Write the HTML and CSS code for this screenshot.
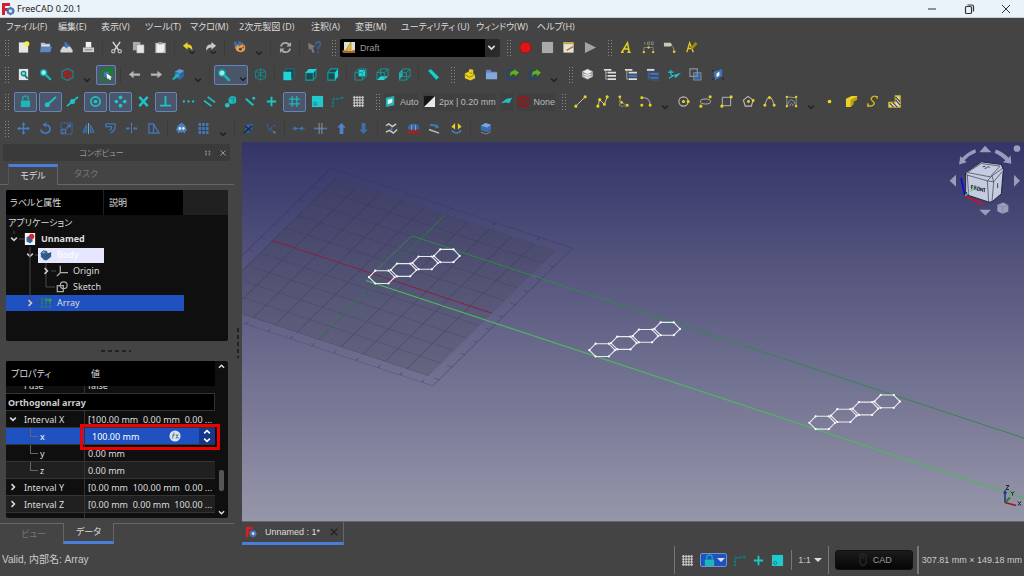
FILE: index.html
```html
<!DOCTYPE html>
<html lang="ja">
<head>
<meta charset="utf-8">
<title>FreeCAD 0.20.1</title>
<link rel="stylesheet" href="styles.css">
</head>
<body>
<svg class="defs" aria-hidden="true">
<defs>
<linearGradient id="sky" x1="0" y1="0" x2="0" y2="1"><stop offset="0" stop-color="#343468"/><stop offset="1" stop-color="#9696aa"/></linearGradient>
<pattern id="fine" width="1" height="1" patternUnits="userSpaceOnUse"><path d="M0 0H1M0 0V1" stroke="#22223c" stroke-opacity=".12" stroke-width=".3"/></pattern>
<pattern id="major" width="10" height="10" patternUnits="userSpaceOnUse"><path d="M0 0H10M0 0V10" stroke="#20203a" stroke-opacity=".36" stroke-width=".6"/></pattern>
<g id="hex"><path d="M0 0L6.3-6.5H19.5L25.7 0L19.5 6.3H6.3Z" fill="none" stroke="#e8e8f0" stroke-width="1.1"/><path d="M0 0h.01M6.3-6.5h.01M19.5-6.5h.01M25.7 0h.01M19.5 6.3h.01M6.3 6.3h.01" stroke="#fff" stroke-width="2.200" stroke-linecap="round"/></g>
<g id="chain"><use href="#hex"/><use href="#hex" x="21.7" y="-7.1"/><use href="#hex" x="43.3" y="-14.2"/><use href="#hex" x="65" y="-21.3"/></g>
</defs>
<symbol id="logo" viewBox="0 0 14 14"><path d="M1 1h8v3H4v2h3v3H4v4H1z" fill="#d3202a"/><circle cx="9.500" cy="9" r="2.800" fill="none" stroke="#4b76b8" stroke-width="2"/><path d="M9.500 4.500v9M5 9h9M6.500 6l6 6M12.500 6l-6 6" stroke="#4b76b8" stroke-width=".8"/><circle cx="9.500" cy="9" r="1.600" fill="#dfe8f4"/></symbol>
<symbol id="new" viewBox="0 0 14 14"><path d="M2 1.500h10v11H2z" fill="#e6e6e2"/><circle cx="10.500" cy="3" r="2.800" fill="#f5ee4a"/></symbol>
<symbol id="open" viewBox="0 0 14 14"><path d="M2 2h4l1 1h5v7H2z" fill="#b9c3cf"/><path d="M2.500 6H14l-2 6H1z" fill="#5b87c5"/><path d="M3 5h8" stroke="#eee"/></symbol>
<symbol id="save" viewBox="0 0 14 14"><path d="M3 6h8l2.500 4v2.500h-13V10z" fill="#d4d6d8"/><path d="M3.500 2Q8 0 8.500 4h2L7 8 3.500 4.500h2Q5.500 3 3.500 2" fill="#4378b8"/></symbol>
<symbol id="print" viewBox="0 0 14 14"><path d="M4 1h6v6H4z" fill="#f1f1f1"/><path d="M1 7h12v5H1z" fill="#cdd0d1"/><path d="M3 9.500h8" stroke="#777"/></symbol>
<symbol id="cut" viewBox="0 0 14 14"><path d="M3 1l6.500 9M11 1L4.500 10" stroke="#dcdcdc" stroke-width="1.500" fill="none"/><g fill="none" stroke="#bbb" stroke-width="1.400"><circle cx="3.500" cy="11" r="1.700"/><circle cx="10.500" cy="11" r="1.700"/></g></symbol>
<symbol id="copy" viewBox="0 0 14 14"><path d="M1 1h8v9H1z" fill="#aaa"/><path d="M5 4h8v9H5z" fill="#e5e5e5" stroke="#888" stroke-width=".5"/></symbol>
<symbol id="paste" viewBox="0 0 14 14"><path d="M1.500 2h11v11h-11z" fill="#c4c4c4"/><path d="M3 3.500h8V10l-2 2H3z" fill="#f0f0f0"/><path d="M5 1h4v2.500H5z" fill="#999"/></symbol>
<symbol id="undo" viewBox="0 0 14 14"><path d="M1 5l5-4v2.500q6 0 5 7.500Q10 7 6 7v2.500z" fill="#e8d028"/><path d="M8 11l3 2.500 3-2.500" stroke="#222" stroke-width="1.500" fill="none"/></symbol>
<symbol id="redo" viewBox="0 0 14 14"><path d="M13 5L8 1v2.500Q1 4 2.500 11 4 7 8 7v2.500z" fill="#c8c8c8"/><path d="M7 11l3 2.500 3-2.500" stroke="#222" stroke-width="1.500" fill="none"/></symbol>
<symbol id="macro" viewBox="0 0 14 14"><path d="M2 5q6-3 11 1 1 6-5 6Q2 11 2 5z" fill="#e8a04a"/><path d="M1 1l3-.5V6L2 7zM5 1l3-1 1 4-3 2z" fill="#3f6fae"/><circle cx="8" cy="9" r="1.600" fill="#444"/><circle cx="11" cy="7" r="1" fill="#c23"/><path d="M9 2l4 4" stroke="#d9c08a"/></symbol>
<symbol id="refresh" viewBox="0 0 14 14"><path d="M2 6q1-4 5-4 3 0 4 2.500M12 8q-1 4-5 4-3 0-4-2.500" fill="none" stroke="#aaa" stroke-width="1.800"/><path d="M13 1v5H8zM1 13V8h5z" fill="#aaa"/></symbol>
<symbol id="whats" viewBox="0 0 14 14"><path d="M0 2l8 4-3 1 2 5-2 1-2-5-2 2z" fill="#7b7b7b"/><path d="M8.500 4q0-3 2.500-3t2.500 2.500q0 2-2.500 3V9M11 11v1.800" fill="none" stroke="#38669b" stroke-width="1.800"/></symbol>
<symbol id="draft" viewBox="0 0 14 14"><path d="M2 1h11v11H2z" fill="#ddd"/><path d="M4 9l5-8v8z" fill="#e4c31e" stroke="#8f7000" stroke-width=".5"/><path d="M0 9l8 1 5-1v3H1z" fill="#a8671c"/></symbol>
<symbol id="record" viewBox="0 0 14 14"><circle cx="7" cy="7" r="6" fill="#e01616" stroke="#8d0d0d" stroke-width=".6"/></symbol>
<symbol id="stop" viewBox="0 0 14 14"><path d="M1 1h12v12H1z" fill="#aaa"/></symbol>
<symbol id="edit" viewBox="0 0 14 14"><path d="M1.500 1.500h11v11h-11z" fill="#e4e4df"/><path d="M1.500 1.500h11v2h-11z" fill="#c7aa38"/><path d="M5 10l7-4" stroke="#b7751e" stroke-width="1.600"/></symbol>
<symbol id="play" viewBox="0 0 14 14"><path d="M1 1l12 6-12 6z" fill="#a4a4a4"/></symbol>
<symbol id="texta" viewBox="0 0 14 14"><path d="M2 12l6-10 2 10M4.500 8.500h5M1 12h3M8 12h3.500" fill="none" stroke="#e6cf25" stroke-width="1.600"/></symbol>
<symbol id="dim" viewBox="0 0 14 14"><path d="M3 1v3M6 1h2v3H6zM10 1h2v3h-2zM2 7v5M12 7v5M2 7h10" fill="none" stroke="#8c8c8c" stroke-width=".9"/><path d="M2 12h.01M12 12h.01M7 7h.01" stroke="#e7cf20" stroke-width="2.500" stroke-linecap="round"/></symbol>
<symbol id="label" viewBox="0 0 14 14"><path d="M1 2h7l2 2-2 2H1z" fill="#ccc9b8"/><path d="M9 5q3 2 3 6" stroke="#999" fill="none"/><circle cx="12" cy="11.500" r="1.400" fill="#e7cf20"/></symbol>
<symbol id="astyle" viewBox="0 0 14 14"><path d="M2 12L5 2l4 10M3 8h5" fill="none" stroke="#e0c723" stroke-width="1.500"/><path d="M6 9l1-3 4-5 2.500 2L9 8z" fill="#a18a08"/></symbol>
<symbol id="fit" viewBox="0 0 14 14"><path d="M2 1h10v12H2z" fill="#e3e6e4"/><circle cx="7" cy="6" r="2.500" fill="#67d6d5" stroke="#087c80" stroke-width="1.200"/><path d="M8.500 8l3 3.500" stroke="#087c80" stroke-width="2"/></symbol>
<symbol id="zoomi" viewBox="0 0 14 14"><circle cx="5" cy="5" r="3.300" fill="#9beceb" stroke="#0b989c" stroke-width="1.500"/><path d="M7.500 7.500l4.500 4.500" stroke="#16b7ba" stroke-width="2.500" stroke-linecap="round"/></symbol>
<symbol id="nodraw" viewBox="0 0 14 14"><path d="M7 .5l6 3.200v6.600l-6 3.200-6-3.200V3.700z" fill="none" stroke="#1a8a8f" stroke-width="1.200"/><circle cx="7" cy="7" r="3.600" fill="#3a4a4a" stroke="#c51414" stroke-width="1.500"/><path d="M4.500 4.500l5 5" stroke="#c51414" stroke-width="1.500"/></symbol>
<symbol id="boxsel" viewBox="0 0 14 14"><path d="M1 4l4-3h8v8l-3 4H1zM1 4h9v9M10 4l3-3" fill="none" stroke="#07910e" stroke-width="1.500"/><circle cx="7" cy="7" r="3.200" fill="#4676be"/><path d="M7 6l6 4-2 .5 1 2-1.500.5-1-2L8 12z" fill="#fff"/></symbol>
<symbol id="left" viewBox="0 0 14 14"><path d="M1 7l5-4v2.800h7v2.500H6V11z" fill="#b5b5b5"/></symbol>
<symbol id="right" viewBox="0 0 14 14"><path d="M13 7L8 3v2.800H1v2.500h7V11z" fill="#b5b5b5"/></symbol>
<symbol id="bluebox" viewBox="0 0 14 14"><path d="M3 4l5-3 5 2v6l-4 4-6-3z" fill="#32639e"/><path d="M3 4l5-3 5 2-4 3z" fill="#6594d0"/><path d="M0 12l4-5-1-1h5v5l-1.500-1.500L2 13z" fill="#1fb0b5"/></symbol>
<symbol id="wire" viewBox="0 0 14 14"><path d="M7 1l5.500 2.500v7L7 13l-5.500-2.500v-7zM1.500 3.500L7 6l5.500-2.500M7 6v7M7 1v6M1.500 10.500L7 7l5.500 3.500" fill="none" stroke="#138b8e" stroke-width="1"/></symbol>
<symbol id="front" viewBox="0 0 14 14"><path d="M2 4l3-3h8v8l-3 4H2z" fill="#14474a" stroke="#12898c" stroke-width=".8"/><path d="M1.500 4H10v9H1.500z" fill="#20d5d8"/></symbol>
<symbol id="top" viewBox="0 0 14 14"><path d="M2 5h8v8H2zM10 5l3-4v8l-3 4" fill="#1f4a4c" stroke="#15989c" stroke-width="1.200"/><path d="M1.500 5l3.500-4h8.500L10 5z" fill="#20d5d8"/></symbol>
<symbol id="side" viewBox="0 0 14 14"><path d="M2 5h8v8H2zL5 1h8" fill="#1f4a4c" stroke="#15989c" stroke-width="1.200"/><path d="M2 5l3-4h8l-3 4z" fill="#1f4a4c" stroke="#15989c"/><path d="M9.500 5L13 1v8.500L9.500 13z" fill="#20d5d8"/></symbol>
<symbol id="rear" viewBox="0 0 14 14"><path d="M5 2h7v7H5z" fill="#20d5d8"/><path d="M1 5l4-4h8v8l-4 4H1zV5h8v8M9 5l4-4" fill="none" stroke="#15989c"/></symbol>
<symbol id="bottom" viewBox="0 0 14 14"><path d="M1 13l4-4h8l-4 4z" fill="#20d5d8"/><path d="M1 5l4-4h8v8M1 5h8v8M1 5v8M9 5l4-4M5 1v7" fill="none" stroke="#15989c"/></symbol>
<symbol id="lside" viewBox="0 0 14 14"><path d="M1 5l4-4v8l-4 4z" fill="#20aeb1"/><path d="M5 1h8v8l-4 4H1M1 5h8v8M9 5l4-4M5 9h8" fill="none" stroke="#15989c"/></symbol>
<symbol id="measure" viewBox="0 0 14 14"><path d="M1 3l3-2 9 9-3 3z" fill="#20cdd1" stroke="#0b7478" stroke-width=".6"/></symbol>
<symbol id="part" viewBox="0 0 14 14"><path d="M2 6l4-2 1-3 4 1v4l2 2v3l-5 2.500L2 11z" fill="#e9cf22"/><path d="M2 7l5 3 5-2.500M7 5l3 1" fill="none" stroke="#8d7a05" stroke-width=".9"/></symbol>
<symbol id="folder" viewBox="0 0 14 14"><path d="M1 2h5l1 2h6v8H1z" fill="#5e87bd"/><path d="M1 5h12v7H1z" fill="#82a8dc"/></symbol>
<symbol id="link" viewBox="0 0 14 14"><path d="M6 2H3Q1.500 2 1.500 3.500v7q0 1.500 1.500 1.500h6q1.500 0 1.500-1.500V9.500" fill="none" stroke="#25466e" stroke-width="1.800"/><path d="M4.500 9q-1-6 4.500-6V1l5 4-4.500 4V6.500Q6 6 4.500 9" fill="#57b81c"/></symbol>
<symbol id="layers" viewBox="0 0 14 14"><path d="M1 9.500L7 12.500l6-3V4L7 1 1 4z" fill="#aaa"/><path d="M1 4l6-3 6 3-6 3zM1 6.500l6 3 6-3M1 9l6 3 6-3" fill="#eee" stroke="#777" stroke-width=".6"/></symbol>
<symbol id="treew" viewBox="0 0 14 14"><path d="M1 2h8M5 5h9M5 8.500h9M5 12h9" stroke="#ddd" stroke-width="2"/><path d="M3 3v9h2M3 5h2M3 8.500h2" fill="none" stroke="#aaa"/></symbol>
<symbol id="treeb" viewBox="0 0 14 14"><path d="M1 2h8M5 5h9M5 12h9" stroke="#ddd" stroke-width="2"/><path d="M5 8.500h9" stroke="#3c75c8" stroke-width="2.500"/><path d="M3 3v9h2" fill="none" stroke="#aaa"/></symbol>
<symbol id="treeall" viewBox="0 0 14 14"><path d="M1 2h8" stroke="#ddd" stroke-width="2"/><path d="M4 4.500h9.500v8.500H4z" fill="none" stroke="#3569ae" stroke-dasharray="2 1"/><path d="M5 6.500h8M5 10.500h8" stroke="#3c75c8" stroke-width="2"/><path d="M2.500 3v9" stroke="#3569ae"/></symbol>
<symbol id="wp" viewBox="0 0 14 14"><path d="M4 8l10-3-6 6-1-3z" fill="#1fc8cb"/><path d="M0 4.500h6M3 2v5l3 2M1 11l5-3" fill="none" stroke="#1fc8cb" stroke-width="1.200"/></symbol>
<symbol id="overlap" viewBox="0 0 14 14"><path d="M5 5h8v8H5z" fill="#3467a7" stroke="#888"/><path d="M1 1h8v8H1z" fill="none" stroke="#8b9298" stroke-width="1.300"/></symbol>
<symbol id="plane" viewBox="0 0 14 14"><path d="M3 4l9-3v8l-8 4z" fill="#4076b8"/><path d="M6 6l3-2v4l-3 2z" fill="#fff"/><path d="M1 2l2 2M1 13l3-2M12 10l2 3" stroke="#222"/></symbol>
<symbol id="lock" viewBox="0 0 14 14"><path d="M4 6V4q0-3 3-3t3 3v2" fill="none" stroke="#1ba5a8" stroke-width="1.500"/><path d="M2 6h10v7H2z" fill="#1cb7ba"/></symbol>
<symbol id="send" viewBox="0 0 14 14"><path d="M3.500 10.500L13 2" stroke="#1cc5c8" stroke-width="2"/><circle cx="3.500" cy="10.500" r="2.700" fill="#1cc5c8"/></symbol>
<symbol id="smid" viewBox="0 0 14 14"><path d="M1 12L13 2" stroke="#1cc5c8" stroke-width="1.800"/><circle cx="7" cy="7" r="2.700" fill="#1cc5c8"/></symbol>
<symbol id="scen" viewBox="0 0 14 14"><circle cx="7" cy="7" r="5" fill="none" stroke="#1cc5c8" stroke-width="1.800"/><circle cx="7" cy="7" r="2" fill="#1cc5c8"/></symbol>
<symbol id="sang" viewBox="0 0 14 14"><g fill="#1cc5c8"><circle cx="7" cy="2.500" r="2"/><circle cx="7" cy="11.500" r="2"/><circle cx="2.500" cy="7" r="2"/><circle cx="11.500" cy="7" r="2"/></g></symbol>
<symbol id="sint" viewBox="0 0 14 14"><path d="M2.500 2l9 10M11.500 2l-9 10" stroke="#1cc5c8" stroke-width="2.600"/></symbol>
<symbol id="sperp" viewBox="0 0 14 14"><path d="M7 1v10M1 11.500h12" stroke="#1cc5c8" stroke-width="2"/></symbol>
<symbol id="sext" viewBox="0 0 14 14"><path d="M2 7h.01M7 7h.01M12 7h.01" stroke="#1cc5c8" stroke-width="2.500" stroke-linecap="round"/></symbol>
<symbol id="spar" viewBox="0 0 14 14"><path d="M1 6l8 6M5 2l8 6" stroke="#1cc5c8" stroke-width="1.800"/></symbol>
<symbol id="sspec" viewBox="0 0 14 14"><path d="M5 3l3-2 5 1v6l-3 2-5-1z" fill="#20b9bb"/><path d="M5 3l5 1 3-2M10 4v6" fill="none" stroke="#0d7376" stroke-width=".7"/><circle cx="3.500" cy="11" r="2.500" fill="#1cc5c8"/></symbol>
<symbol id="snear" viewBox="0 0 14 14"><path d="M2 4l8 7" stroke="#1cc5c8" stroke-width="2"/><circle cx="10.500" cy="3.500" r="1.500" fill="#1cc5c8"/></symbol>
<symbol id="splus" viewBox="0 0 14 14"><path d="M7 2v10M2 7h10" stroke="#1cc5c8" stroke-width="2"/></symbol>
<symbol id="sgrid" viewBox="0 0 14 14"><path d="M4.500 1v12M9.500 1v12M1 4.500h12M1 9.500h12" stroke="#1cb8bb" stroke-width="1.300"/></symbol>
<symbol id="swp" viewBox="0 0 14 14"><path d="M1 1h12v12H1z" fill="#20c9cc"/><circle cx="4.500" cy="9.500" r="1.700" fill="none" stroke="#138286"/></symbol>
<symbol id="sdim" viewBox="0 0 14 14"><path d="M2 13V5M2 4h8M11 4l3-2" fill="none" stroke="#157a7e" stroke-width="2.200" stroke-dasharray="2.500 1"/><path d="M10 5v6" stroke="#105558" stroke-width="1.500" stroke-dasharray="2 1"/></symbol>
<symbol id="grid" viewBox="0 0 14 14"><path d="M2.500 1v12M5.500 1v12M8.500 1v12M11.500 1v12M1 2.500h12M1 5.500h12M1 8.500h12M1 11.500h12" stroke="#d8d8d8"/></symbol>
<symbol id="auto" viewBox="0 0 14 14"><path d="M2 3l9-2v10l-9 2z" fill="#1fb5b8"/><path d="M4 5l5-1v4l-5 2z" fill="#eee"/></symbol>
<symbol id="bw" viewBox="0 0 14 14"><path d="M1 1h12v12H1z" fill="#161616"/><path d="M13 1v12H1z" fill="#e8e8e8"/></symbol>
<symbol id="apply" viewBox="0 0 14 14"><path d="M1 9l6-5 6-1-3 6-3-1z" fill="#20bfc2"/></symbol>
<symbol id="none" viewBox="0 0 14 14"><circle cx="7" cy="7" r="5.500" fill="none" stroke="#a01218" stroke-width="1.800"/><path d="M3 3l8 8" stroke="#a01218" stroke-width="1.800"/></symbol>
<symbol id="line" viewBox="0 0 14 14"><path d="M2 12L12 2" stroke="#ccc"/><path d="M2 12h.01M12 2h.01" stroke="#ecd318" stroke-width="3.400" stroke-linecap="round"/></symbol>
<symbol id="poly" viewBox="0 0 14 14"><path d="M2 12l2-7 5 5 3-8" stroke="#ccc" fill="none"/><path d="M2 12h.01M4 5h.01M9 10h.01M12 2h.01" stroke="#ecd318" stroke-width="3.400" stroke-linecap="round"/></symbol>
<symbol id="fillet" viewBox="0 0 14 14"><path d="M3 1v11h10M3 2q1 8 9 9" stroke="#999" fill="none" stroke-dasharray="3 1"/><path d="M3 2h.01M5 8h.01M11 11h.01" stroke="#ecd318" stroke-width="3" stroke-linecap="round"/></symbol>
<symbol id="arc" viewBox="0 0 14 14"><path d="M3 3q9-1 9 8" stroke="#bbb" fill="none"/><path d="M3 3h.01M3 11h.01M12 11h.01" stroke="#ecd318" stroke-width="3.200" stroke-linecap="round"/></symbol>
<symbol id="circle" viewBox="0 0 14 14"><circle cx="7" cy="7" r="5" fill="none" stroke="#bbb" stroke-width="1.200"/><path d="M7 7h.01M12 7h.01" stroke="#ecd318" stroke-width="3.400" stroke-linecap="round"/></symbol>
<symbol id="ellipse" viewBox="0 0 14 14"><ellipse cx="7" cy="7" rx="5.500" ry="2.700" fill="none" stroke="#bbb"/><path d="M2 12h.01M12 2h.01" stroke="#ecd318" stroke-width="3.400" stroke-linecap="round"/></symbol>
<symbol id="rect" viewBox="0 0 14 14"><path d="M2.500 2.500h9v9h-9z" fill="none" stroke="#bbb"/><path d="M2 12h.01M12 2h.01" stroke="#ecd318" stroke-width="3.400" stroke-linecap="round"/></symbol>
<symbol id="penta" viewBox="0 0 14 14"><path d="M6.500 1.500L12 5.500 10 12H3.500L1.500 5.500z" fill="none" stroke="#bbb" stroke-width="1.200"/><path d="M7 7h.01M12 6h.01" stroke="#ecd318" stroke-width="3.200" stroke-linecap="round"/></symbol>
<symbol id="spline" viewBox="0 0 14 14"><path d="M2 11Q7-7 12 11" fill="none" stroke="#bbb"/><path d="M2 11h.01M7 3h.01M12 11h.01" stroke="#ecd318" stroke-width="3.200" stroke-linecap="round"/></symbol>
<symbol id="bezier" viewBox="0 0 14 14"><path d="M2 2v10M12 2v10M2 2l10 1M2 12q5-14 10 0M5 12q2-6 4 0" fill="none" stroke="#999"/><path d="M2 12h.01M12 12h.01M2 2h.01M12 2h.01" stroke="#ecd318" stroke-width="2.600" stroke-linecap="round"/></symbol>
<symbol id="point" viewBox="0 0 14 14"><circle cx="7" cy="7" r="2" fill="#ecd318"/></symbol>
<symbol id="facebinder" viewBox="0 0 14 14"><path d="M1 4l6-3h6v4l-4 2v3l-3 3H1z" fill="#ead12a"/><path d="M6 5l7-3v3L9 7v3l-3 3z" fill="#b89f10"/></symbol>
<symbol id="shape" viewBox="0 0 14 14"><path d="M12 3Q10 0 7 2 4 4 7 6.500 11 9 7 11.500 3 13 2 10M12 1v3M2 9v4" fill="none" stroke="#cdb51f" stroke-width="1.500"/></symbol>
<symbol id="hatch" viewBox="0 0 14 14"><path d="M8 1h5v12H1V8h7z" fill="#ddd" stroke="#d8bc24" stroke-width="1.500"/><path d="M2 9l4 4M5 8l5 5M8 5l5 6M8 2l5 5" stroke="#444" stroke-width="1.300"/></symbol>
<symbol id="move" viewBox="0 0 14 14"><path d="M7 1v12M1 7h12" stroke="#467fc5" stroke-width="1.500"/><path d="M7 0l2 3H5zM7 14l2-3H5zM0 7l3-2v4zM14 7l-3-2v4z" fill="#467fc5"/></symbol>
<symbol id="rotate" viewBox="0 0 14 14"><path d="M8 3q4 1 4 5-1 4-5 4-4 0-5-4" fill="none" stroke="#4277b8" stroke-width="1.900"/><path d="M8 0v6L3.500 3z" fill="#4277b8"/></symbol>
<symbol id="scale" viewBox="0 0 14 14"><path d="M1 1h12v12H1z" fill="none" stroke="#4277b8" stroke-dasharray="2 1"/><path d="M2 8h4v4H2zM7 7l4-4M8 3h3v3" fill="none" stroke="#4277b8" stroke-width="1.300"/></symbol>
<symbol id="mirror" viewBox="0 0 14 14"><path d="M5 3v8H1zM9 3v8h4z" fill="#315d96" stroke="#4277b8"/><path d="M7 1v12" stroke="#8aa" /></symbol>
<symbol id="offset" viewBox="0 0 14 14"><path d="M2 2h10q1 7-5 10M2 2v3h6q1 2-2 4" fill="none" stroke="#4277b8" stroke-width="1.400"/></symbol>
<symbol id="trim" viewBox="0 0 14 14"><path d="M7 1v12" stroke="#628bb8" stroke-dasharray="3 1"/><path d="M1 7h4M9 7h4" stroke="#4277b8" stroke-width="2"/></symbol>
<symbol id="stretch" viewBox="0 0 14 14"><path d="M2 2h5v10H2zM7 2l6 10H7" fill="none" stroke="#4277b8" stroke-width="1.400"/></symbol>
<symbol id="clone" viewBox="0 0 14 14"><path d="M3 4q4-6 8 0l2 5-2 1v2H9.500v-1h-5v1H3v-2L1 9z" fill="#4d7fbd"/><circle cx="5.200" cy="7" r="1.500" fill="#d7e3f2"/><circle cx="9" cy="7" r="1.500" fill="#d7e3f2"/></symbol>
<symbol id="array" viewBox="0 0 14 14"><path d="M3 1v12M7 1v12M11 1v12" stroke="#4277b8" stroke-width="2.800" stroke-dasharray="3.300 1"/></symbol>
<symbol id="edita" viewBox="0 0 14 14"><path d="M4 3l8-1-2 9-7 1z" fill="#31619d"/><path d="M2 12l9-8M3 4l7 6" stroke="#172944" stroke-width="1.500"/></symbol>
<symbol id="subel" viewBox="0 0 14 14"><path d="M3 2l2 5 7 5M12 3L5 9" fill="none" stroke="#355f91" stroke-width="1.500" stroke-dasharray="3 1"/><circle cx="11" cy="11" r="1.300" fill="#777"/></symbol>
<symbol id="join" viewBox="0 0 14 14"><path d="M0 7h14" stroke="#355f95" stroke-width="1.500"/><path d="M2.500 4.500L6 7 2.500 9.500zM11.500 4.500L8 7l3.500 2.500z" fill="#4277b8"/></symbol>
<symbol id="split" viewBox="0 0 14 14"><path d="M0 7h14" stroke="#4277b8" stroke-width="1.800"/><path d="M5.500 1v12M8.500 1v12" stroke="#999"/></symbol>
<symbol id="up" viewBox="0 0 14 14"><path d="M7 1l4.500 5H9v7H5V6H2.500z" fill="#5083ca"/></symbol>
<symbol id="down" viewBox="0 0 14 14"><path d="M7 13l4.500-5H9V1H5v7H2.500z" fill="#3f6eae"/></symbol>
<symbol id="wtob" viewBox="0 0 14 14"><path d="M1 4l3-2 4 3 4-3M1 11l4-2 4 3 4-4" fill="none" stroke="#ccc" stroke-width="1.500"/><path d="M7 6v3" stroke="#4277b8" stroke-width="2"/></symbol>
<symbol id="heal" viewBox="0 0 14 14"><path d="M1 6q0-4 6-4t6 4v2H1z" fill="#3768a6"/><path d="M2 8q-1 4 2.500 3.500T7 9q-1 3 2.500 3T12 8" fill="none" stroke="#bd171e" stroke-width="1.800"/><path d="M5 3v6M9 3v6" stroke="#85a6d2"/></symbol>
<symbol id="slope" viewBox="0 0 14 14"><path d="M1 8l11 4" stroke="#bbb" stroke-width="1.600"/><path d="M2 3q5 0 8 2" stroke="#4277b8" stroke-width="2" fill="none"/><path d="M9 2l3 4-4 1z" fill="#4277b8"/></symbol>
<symbol id="flip" viewBox="0 0 14 14"><path d="M5.500 1v7L1.500 5zM8.500 1v7l4-3z" fill="#eace20"/><path d="M2 9q5 6 10 0" fill="none" stroke="#4277b8" stroke-width="2"/></symbol>
<symbol id="view2d" viewBox="0 0 14 14"><path d="M2 4l5-3 6 2v5l-4 3-7-2z" fill="#386eaf"/><path d="M2 4l5-3 6 2-4 3z" fill="#79a6dd"/><path d="M2 11l6 2 5-3" fill="none" stroke="#888"/></symbol>
<symbol id="doc" viewBox="0 0 14 14"><path d="M1 0h12v14H1z" fill="#f3f3f4"/><path d="M3 5l4-2 3 2v5l-3 2-4-2z" fill="#32669d"/><circle cx="9" cy="4" r="3" fill="#dc222a"/></symbol>
<symbol id="body" viewBox="0 0 14 14"><path d="M1 5l3-3 4 1 1 2 4-1v5l-5 4-3 0-4-4z" fill="#315f8d"/><path d="M1 5l3-3 4 1-3 3zM6 9l7-5" fill="#6ba0cf" stroke="#1d416b" stroke-width=".8"/></symbol>
<symbol id="origin" viewBox="0 0 14 14"><path d="M5 1v8h9M5 9l-4 4" fill="none" stroke="#aaa" stroke-width="1.500"/></symbol>
<symbol id="sketch" viewBox="0 0 14 14"><path d="M1.500 5.500h7v7h-7z" fill="none" stroke="#aaa" stroke-width="1.500"/><circle cx="9" cy="5" r="4" fill="none" stroke="#aaa" stroke-width="1.400"/></symbol>
<symbol id="tarray" viewBox="0 0 14 14"><path d="M2.500 1v12M7 1v12M11.500 5v8" stroke="#2d7184" stroke-width="2.800" stroke-dasharray="3.300 1"/><path d="M6 3h5V1l3 2.500-3 2.500V4.500H6z" fill="#42a828"/></symbol>
<symbol id="chev" viewBox="0 0 14 14"><path d="M3 5l4 4 4-4" fill="none" stroke="currentColor" stroke-width="2.200"/></symbol>
<symbol id="x" viewBox="0 0 14 14"><path d="M2.500 2.500l9 9M11.500 2.500l-9 9" fill="none" stroke="currentColor" stroke-width="1.700"/></symbol>
</svg>

<header class="titlebar">
<svg class="ico"><use href="#logo"/></svg><h1>FreeCAD 0.20.1</h1>
<div class="winctl">
<button aria-label="最小化"><svg viewBox="0 0 14 14"><path d="M3 7h8" stroke="#333"/></svg></button>
<button aria-label="元に戻す"><svg viewBox="0 0 14 14"><path d="M3.500 5.500q0-1 1-1h4q1 0 1 1v5q0 1-1 1h-4q-1 0-1-1zM5.500 3h4.500q1.500 0 1.500 1.500v5" fill="none" stroke="#333" stroke-width="1.200"/></svg></button>
<button aria-label="閉じる"><svg viewBox="0 0 14 14"><path d="M3 3l8 8M11 3l-8 8" stroke="#333"/></svg></button>
</div>
</header>

<nav class="menubar" aria-label="メニュー">
<button>ファイル(F)</button><button>編集(E)</button><button>表示(V)</button><button>ツール(T)</button><button>マクロ(M)</button><button>2次元製図 (D)</button><button>注釈(A)</button><button>変更(M)</button><button>ユーティリティ (U)</button><button>ウィンドウ(W)</button><button>ヘルプ(H)</button>
</nav>

<div class="toolbars">
<div class="bar">
<i class="grip"></i>
<div class="seg s4"><button aria-label="新規"><svg><use href="#new"/></svg></button><button aria-label="開く"><svg><use href="#open"/></svg></button><button aria-label="保存"><svg><use href="#save"/></svg></button><button aria-label="印刷"><svg><use href="#print"/></svg></button></div>
<i class="sep"></i>
<div class="seg s3"><button aria-label="切り取り"><svg><use href="#cut"/></svg></button><button aria-label="コピー"><svg><use href="#copy"/></svg></button><button aria-label="貼り付け"><svg><use href="#paste"/></svg></button></div>
<i class="sep"></i>
<div class="seg s2"><button aria-label="元に戻す"><svg><use href="#undo"/></svg></button><button aria-label="やり直し"><svg><use href="#redo"/></svg></button></div>
<i class="sep"></i>
<div class="seg s1"><button aria-label="マクロ"><svg><use href="#macro"/></svg></button></div><button class="more" aria-label="マクロ一覧"><svg><use href="#chev"/></svg></button>
<i class="sep"></i>
<div class="seg s1"><button aria-label="更新"><svg><use href="#refresh"/></svg></button></div>
<i class="sep"></i>
<div class="seg s1"><button aria-label="これは何"><svg><use href="#whats"/></svg></button></div>
<i class="grip"></i>
<div class="workbench"><svg><use href="#draft"/></svg><select aria-label="ワークベンチ"><option>Draft</option></select><svg class="arrow"><use href="#chev"/></svg></div>
<i class="grip"></i>
<div class="seg s4"><button aria-label="記録"><svg><use href="#record"/></svg></button><button aria-label="停止"><svg><use href="#stop"/></svg></button><button aria-label="マクロ編集"><svg><use href="#edit"/></svg></button><button aria-label="実行"><svg><use href="#play"/></svg></button></div>
<i class="grip"></i>
<div class="seg s4"><button aria-label="テキスト"><svg><use href="#texta"/></svg></button><button aria-label="寸法"><svg><use href="#dim"/></svg></button><button aria-label="ラベル"><svg><use href="#label"/></svg></button><button aria-label="注釈スタイル"><svg><use href="#astyle"/></svg></button></div>
</div>

<div class="bar">
<i class="grip"></i>
<div class="seg s3"><button aria-label="全体表示"><svg><use href="#fit"/></svg></button><button aria-label="選択を表示"><svg><use href="#zoomi"/></svg></button><button aria-label="描画スタイル"><svg><use href="#nodraw"/></svg></button></div><button class="more" aria-label="描画スタイル一覧"><svg><use href="#chev"/></svg></button>
<div class="seg s1"><button class="on" aria-label="ボックス選択"><svg><use href="#boxsel"/></svg></button></div>
<i class="sep"></i>
<div class="seg s3"><button aria-label="戻る"><svg><use href="#left"/></svg></button><button aria-label="進む"><svg><use href="#right"/></svg></button><button aria-label="リンク先"><svg><use href="#bluebox"/></svg></button></div><button class="more" aria-label="リンク一覧"><svg><use href="#chev"/></svg></button>
<i class="sep"></i>
<button class="on zoomdrop" aria-label="ズーム"><svg><use href="#zoomi"/></svg><svg class="low"><use href="#chev"/></svg></button>
<div class="seg s1"><button aria-label="等角投影"><svg><use href="#wire"/></svg></button></div>
<i class="sep"></i>
<div class="seg s3"><button aria-label="前面"><svg><use href="#front"/></svg></button><button aria-label="上面"><svg><use href="#top"/></svg></button><button aria-label="右面"><svg><use href="#side"/></svg></button></div>
<i class="sep"></i>
<div class="seg s3"><button aria-label="背面"><svg><use href="#rear"/></svg></button><button aria-label="底面"><svg><use href="#bottom"/></svg></button><button aria-label="左面"><svg><use href="#lside"/></svg></button></div>
<i class="sep"></i>
<div class="seg s1"><button aria-label="距離計測"><svg><use href="#measure"/></svg></button></div>
<i class="grip"></i>
<div class="seg s4"><button aria-label="パート"><svg><use href="#part"/></svg></button><button aria-label="グループ"><svg><use href="#folder"/></svg></button><button aria-label="リンク作成"><svg><use href="#link"/></svg></button><button aria-label="サブリンク"><svg><use href="#link"/></svg></button></div><button class="more" aria-label="リンク操作"><svg><use href="#chev"/></svg></button>
<i class="grip"></i>
<div class="seg s7"><button aria-label="レイヤー"><svg><use href="#layers"/></svg></button><button aria-label="グループへ移動"><svg><use href="#treew"/></svg></button><button aria-label="グループ選択"><svg><use href="#treeb"/></svg></button><button aria-label="コンストラクション"><svg><use href="#treeall"/></svg></button><button aria-label="スタイル適用"><svg><use href="#wp"/></svg></button><button aria-label="表示モード"><svg><use href="#overlap"/></svg></button><button aria-label="作業平面"><svg><use href="#plane"/></svg></button></div>
</div>

<div class="bar">
<i class="grip"></i>
<div class="seg s16"><button class="on" aria-label="スナップ"><svg><use href="#lock"/></svg></button><button class="on" aria-label="端点"><svg><use href="#send"/></svg></button><button aria-label="中点"><svg><use href="#smid"/></svg></button><button class="on" aria-label="中心"><svg><use href="#scen"/></svg></button><button class="on" aria-label="角度"><svg><use href="#sang"/></svg></button><button aria-label="交点"><svg><use href="#sint"/></svg></button><button class="on" aria-label="垂線"><svg><use href="#sperp"/></svg></button><button aria-label="延長"><svg><use href="#sext"/></svg></button><button aria-label="平行"><svg><use href="#spar"/></svg></button><button aria-label="特殊"><svg><use href="#sspec"/></svg></button><button aria-label="近接"><svg><use href="#snear"/></svg></button><button aria-label="直交"><svg><use href="#splus"/></svg></button><button class="on" aria-label="グリッド"><svg><use href="#sgrid"/></svg></button><button aria-label="平面スナップ"><svg><use href="#swp"/></svg></button><button aria-label="寸法スナップ"><svg><use href="#sdim"/></svg></button><button aria-label="グリッド表示"><svg><use href="#grid"/></svg></button></div>
<i class="grip"></i>
<div class="tray"><button><svg><use href="#auto"/></svg>Auto</button><button><svg><use href="#bw"/></svg>2px | 0.20 mm</button><button aria-label="適用"><svg><use href="#apply"/></svg></button><button><svg><use href="#none"/></svg>None</button></div>
<i class="grip"></i>
<div class="seg s4"><button aria-label="線"><svg><use href="#line"/></svg></button><button aria-label="ポリライン"><svg><use href="#poly"/></svg></button><button aria-label="フィレット"><svg><use href="#fillet"/></svg></button><button aria-label="円弧"><svg><use href="#arc"/></svg></button></div><button class="more" aria-label="円弧一覧"><svg><use href="#chev"/></svg></button>
<div class="seg s6"><button aria-label="円"><svg><use href="#circle"/></svg></button><button aria-label="楕円"><svg><use href="#ellipse"/></svg></button><button aria-label="四角形"><svg><use href="#rect"/></svg></button><button aria-label="多角形"><svg><use href="#penta"/></svg></button><button aria-label="スプライン"><svg><use href="#spline"/></svg></button><button aria-label="ベジェ"><svg><use href="#bezier"/></svg></button></div><button class="more" aria-label="ベジェ一覧"><svg><use href="#chev"/></svg></button>
<div class="seg s4"><button aria-label="点"><svg><use href="#point"/></svg></button><button aria-label="フェイスバインダー"><svg><use href="#facebinder"/></svg></button><button aria-label="シェイプ文字"><svg><use href="#shape"/></svg></button><button aria-label="ハッチ"><svg><use href="#hatch"/></svg></button></div>
</div>

<div class="bar">
<i class="grip"></i>
<div class="seg s7"><button aria-label="移動"><svg><use href="#move"/></svg></button><button aria-label="回転"><svg><use href="#rotate"/></svg></button><button aria-label="拡大縮小"><svg><use href="#scale"/></svg></button><button aria-label="鏡像"><svg><use href="#mirror"/></svg></button><button aria-label="オフセット"><svg><use href="#offset"/></svg></button><button aria-label="トリム"><svg><use href="#trim"/></svg></button><button aria-label="ストレッチ"><svg><use href="#stretch"/></svg></button></div>
<i class="sep"></i>
<div class="seg s2"><button aria-label="クローン"><svg><use href="#clone"/></svg></button><button aria-label="配列"><svg><use href="#array"/></svg></button></div><button class="more" aria-label="配列一覧"><svg><use href="#chev"/></svg></button>
<i class="sep"></i>
<div class="seg s2"><button aria-label="編集"><svg><use href="#edita"/></svg></button><button aria-label="サブ要素"><svg><use href="#subel"/></svg></button></div>
<i class="sep"></i>
<div class="seg s4"><button aria-label="結合"><svg><use href="#join"/></svg></button><button aria-label="分割"><svg><use href="#split"/></svg></button><button aria-label="アップグレード"><svg><use href="#up"/></svg></button><button aria-label="ダウングレード"><svg><use href="#down"/></svg></button></div>
<i class="sep"></i>
<div class="seg s4"><button aria-label="Bスプライン変換"><svg><use href="#wtob"/></svg></button><button aria-label="スケッチ変換"><svg><use href="#heal"/></svg></button><button aria-label="勾配"><svg><use href="#slope"/></svg></button><button aria-label="寸法反転"><svg><use href="#flip"/></svg></button></div>
<i class="sep"></i>
<div class="seg s1"><button aria-label="2D投影"><svg><use href="#view2d"/></svg></button></div>
</div>
</div>

<main class="work">
<aside class="dock">
<div class="docktitle"><h2>コンボビュー</h2><button aria-label="切り離す"><svg viewBox="0 0 14 14"><path d="M2 3h3v3H2zM8 3h3v3H8zM2 8h3v3H2zM8 8h3v3H8z" fill="#888"/></svg></button><button aria-label="閉じる"><svg><use href="#x"/></svg></button></div>
<div class="tabs toptabs"><button class="active">モデル</button><button>タスク</button></div>
<section class="tree" aria-label="モデルツリー">
<div class="treehead"><span>ラベルと属性</span><span>説明</span></div>
<div class="treebody">
<svg class="guides" viewBox="0 0 100 96"><path d="M8 16v3M13 24h6M24 32v57M29 40h5M29 88h5M40 48v24h9M45 56h5" fill="none" stroke="#4a4a4a"/></svg>
<div class="node root">アプリケーション</div>
<div class="node"><svg class="tw"><use href="#chev"/></svg><svg><use href="#doc"/></svg><b>Unnamed</b></div>
<div class="node l2"><svg class="tw"><use href="#chev"/></svg><span class="bodysel"><svg><use href="#body"/></svg>Body</span></div>
<div class="node l3"><svg class="tw shut"><use href="#chev"/></svg><svg><use href="#origin"/></svg><span>Origin</span></div>
<div class="node l3"><i class="tw"></i><svg><use href="#sketch"/></svg><span>Sketch</span></div>
<div class="node l2 selected"><svg class="tw shut"><use href="#chev"/></svg><svg><use href="#tarray"/></svg><span>Array</span></div>
</div>
</section>
<div class="hsplit"></div>
<section class="props" aria-label="プロパティ">
<div class="proparea">
<div class="prophead"><span>プロパティ</span><span>値</span></div>
<div class="clip">
<table>
<tr><th>Fuse</th><td>false</td></tr>
<tr class="grp"><th colspan="2">Orthogonal array</th></tr>
<tr><th><svg class="tw"><use href="#chev"/></svg>Interval X</th><td>[100.00 mm&nbsp; 0.00 mm&nbsp; 0.00 ...</td></tr>
<tr class="sel"><th class="sub"><label for="ix">x</label></th><td><div class="spin"><input id="ix" value="100.00 mm"><svg class="fx" viewBox="0 0 14 14"><circle cx="7" cy="7" r="6.500" fill="#d9e4ef"/><path d="M4 10l2-7M3.500 6h3M8 5l3 5M11 5l-3 5" stroke="#637c99" stroke-width="1.200"/></svg><span class="steps"><button aria-label="増やす"><svg class="flip"><use href="#chev"/></svg></button><button aria-label="減らす"><svg><use href="#chev"/></svg></button></span></div></td></tr>
<tr><th class="sub">y</th><td>0.00 mm</td></tr>
<tr class="alt"><th class="sub">z</th><td>0.00 mm</td></tr>
<tr><th><svg class="tw shut"><use href="#chev"/></svg>Interval Y</th><td>[0.00 mm&nbsp; 100.00 mm&nbsp; 0.00 ...</td></tr>
<tr class="alt"><th><svg class="tw shut"><use href="#chev"/></svg>Interval Z</th><td>[0.00 mm&nbsp; 0.00 mm&nbsp; 100.00 ...</td></tr>
<tr><th>Number X</th><td>20</td></tr>
</table>
</div>
</div>
<div class="scroll"><svg class="flip"><use href="#chev"/></svg><i></i><svg><use href="#chev"/></svg></div>
<div class="callout"></div>
</section>
<div class="tabs bottabs"><button>ビュー</button><button class="active">データ</button></div>
</aside>
<div class="vsplit"></div>
<section class="mdi">
<svg class="scene" viewBox="242 141 782 380" preserveAspectRatio="xMidYMid slice" role="img" aria-label="3Dビュー">
<path d="M242 141h782v380H242z" fill="url(#sky)"/>
<g transform="matrix(2.197 .727 1.27 -1.252 208.500 302.800)">
<path d="M0 0H100V100H0z" fill="#44444f" fill-opacity=".2"/>
<path d="M0 0H100V100H0z" fill="url(#fine)"/><path d="M0 0H100V100H0z" fill="url(#major)"/>
<path d="M-5-5H105V105H-5z" fill="none" stroke="#2b2b4c" stroke-opacity=".35" stroke-width=".4"/>
<path d="M10-5v2M20-5v2M30-5v2M40-5v2M50-5v2M60-5v2M70-5v2M80-5v2M90-5v2M100-5v2M105 0h-2M105 10h-2M105 20h-2M105 30h-2M105 40h-2M105 50h-2M105 60h-2M105 70h-2M105 80h-2M105 90h-2M-5 30h2M-5 40h2M-5 50h2M-5 60h2M-5 70h2M-5 80h2M-5 90h2M10 105v-2M30 105v-2M50 105v-2M70 105v-2M90 105v-2" stroke="#2b2b4c" stroke-opacity=".45" stroke-width=".4"/>
</g>
<path d="M272 240L491.700 312.700" stroke="#8c2240"/><path d="M445.700 214L318.700 339.300" stroke="#2c7d43"/>
<path d="M366 280L411.700 235.300L1024 437.600" fill="none" stroke="#32884a"/><path d="M366 280L1024 497.600" stroke="#4bb85e" stroke-width="1.200"/>
<use href="#chain" x="369" y="276.700"/><use href="#chain" x="589.300" y="349.700"/><use href="#chain" x="809.300" y="422.300"/>
<g transform="translate(920 140) scale(.3333)">
<g fill="#9b9bbb"><path d="M178 35l17-19 19 19zM178 208h35l-17 17zM108 103v36l-19-18zM282 103v36l18-18z"/><circle cx="291" cy="24" r="10"/><path d="M117 72l4-25 6 5q16-18 39-26l2 10q-19 7-34 23l6 6zM274 70l-25-5 7-6q-12-12-32-22l4-10q22 8 38 25l6-7z"/></g>
<path d="M137 96L184 64 244 72 250 87 244 160 216 184 207 185 146 165 137 153z" fill="#c5cbe0" stroke="#222536" stroke-width="3" stroke-linejoin="round"/>
<path d="M137 96L142 104 202 121 216 106 250 82M142 104L146 165M202 121L206 185M221 124L216 184M202 121L221 124 246 94M216 106L221 124M142 96L184 69 240 77 210 109z" fill="none" stroke="#333749" stroke-width="2"/>
<path d="M154 134v12M154 135h6M154 140h5M163 148v-11h5v5h-5M167 142l2 7M173 140v10h5v-10zM182 152v-10l6 11v-10M190 144h6M193 144v11M188 79l8-2M194 84l8-3M203 78l6 3M233 128v15" stroke="#20232f" stroke-width="2.500" fill="none"/>
<path d="M135 166L123 113" stroke="#0909d8" stroke-width="5"/><path d="M135 166L190 193" stroke="#cf1028" stroke-width="5"/><path d="M135 166L171 136" stroke="#55cb7a" stroke-width="4" stroke-dasharray="15 6"/>
<path d="M232 193l18-7 15 8v19l-17 7-16-8z" fill="#9d9dbb"/><path d="M232 193l16 7 17-6M248 200v20" stroke="#7c7ca0" stroke-width="2" fill="none"/><path d="M271 198h18l-9 9z" fill="#45455f"/>
</g>
<g fill="none"><path d="M1005 502v-10" stroke="#29298e" stroke-width="1.500"/><path d="M1003 493l2-4 2 4z" fill="#29298e"/><path d="M1005 502l5-5" stroke="#227b30" stroke-width="2"/><path d="M1005 502l11 3" stroke="#9b1520" stroke-width="1.500"/><path d="M1006 485h3l-3 4h3M1011 491l1.500 2 1.500-2M1012.500 493v2M1018 501l3 4M1021 501l-3 4" stroke="#222"/></g>
</svg>
<div class="mditabs"><div class="mditab"><svg><use href="#logo"/></svg><span>Unnamed : 1*</span><button aria-label="タブを閉じる"><svg><use href="#x"/></svg></button></div></div>
</section>
</main>

<footer class="status">
<p>Valid, 内部名: Array</p>
<div class="statool"><button aria-label="グリッド"><svg><use href="#grid"/></svg></button><button class="lockbtn" aria-label="スナップロック"><svg><use href="#lock"/></svg><i class="tri"></i></button><button aria-label="寸法"><svg><use href="#sdim"/></svg></button><button aria-label="直交"><svg><use href="#splus"/></svg></button><button aria-label="作業平面"><svg><use href="#swp"/></svg></button></div>
<button class="ratio">1:1<i class="tri"></i></button>
<div class="cadwrap"><button class="cad"><svg viewBox="0 0 14 14"><path d="M4 2q3-2 6 0v8q-3 5-6 0zM7 1v5" fill="none" stroke="#20272a" stroke-width="1.500"/></svg>CAD</button></div>
<output>307.81 mm × 149.18 mm</output>
</footer>
</body>
</html>
```

FILE: styles.css
```css
* { box-sizing: border-box; }
body { margin: 0; height: 100vh; display: flex; flex-direction: column; overflow: hidden; background: #444; color: #ddd; font: 10px/16px "Noto Sans", "Noto Sans CJK JP", sans-serif; font-feature-settings: "palt"; }
.defs { position: absolute; width: 0; height: 0; }
svg { width: 14px; height: 14px; flex: none; }
button { border: 0; padding: 0; margin: 0; background: none; color: inherit; font: inherit; font-feature-settings: inherit; }
h1, h2, p { margin: 0; font: inherit; }

.titlebar { height: 18px; flex: none; display: flex; align-items: center; gap: 2px; padding-left: 1px; background: #ebf3fa; border-bottom: 1px solid #c6cdd2; color: #222; font-size: 9px; }
.winctl { margin-left: auto; display: flex; }
.winctl button { width: 37px; height: 16px; display: flex; align-items: center; justify-content: center; }

.menubar { flex: none; height: 16px; display: grid; grid-template-columns: 52px 43px 44px 45px 49px 72px 44px 46px 75px 61px auto; justify-content: start; padding: 2px 0 0 6px; font-family: "Open Sans", "Noto Sans CJK JP", sans-serif; font-size: 9px; line-height: 14px; white-space: nowrap; }
.menubar button { text-align: left; }

.toolbars { flex: none; }
.bar { display: flex; align-items: center; height: 27px; padding-left: 2px; }
.grip { flex: none; width: 6px; height: 18px; margin: 0 3px 0 6px; background: radial-gradient(circle, #8a8a8a 1px, transparent 1px) 0 0 / 3px 3px; }
.grip:first-child { margin-left: 2px; }
.sep { flex: none; width: 1px; height: 16px; margin: 0 3px; background: #3c3c3c; }
.seg { flex: none; display: flex; }
.seg button { flex: 1; height: 20px; display: flex; align-items: center; justify-content: center; }
.seg svg { width: 13px; height: 13px; }
.s1 { width: 22px; }
.s2 { width: 43px; }
.s3 { width: 65px; }
.s4 { width: 86px; }
.s6 { width: 129px; }
.s7 { width: 151px; }
.s16 { width: 356px; }
.seg .on, .zoomdrop { margin: 0 1px; border: 1px solid #6484bd; border-radius: 2px; background: #4b566b; }
.more { width: 17px; height: 20px; display: flex; align-items: flex-end; justify-content: center; color: #242424; }
.more svg, .low { width: 10px; height: 10px; color: #242424; }
.zoomdrop { width: 34px; height: 20px; display: flex; align-items: center; gap: 7px; padding-left: 2px; }
.low { align-self: flex-end; }
.workbench { width: 160px; height: 18px; display: flex; align-items: center; gap: 4px; padding-left: 2px; border-radius: 2px; background: linear-gradient(90deg, #000 145px, #2a2a2a 145px); }
.workbench select { flex: 1; appearance: none; border: 0; background: none; color: #999; font: 9px "Liberation Sans", sans-serif; padding: 0; }
.workbench .arrow { width: 11px; height: 11px; margin-right: 3px; color: #ddd; }
.tray { display: flex; align-items: center; justify-content: space-between; width: 171px; font-family: "Liberation Sans", sans-serif; font-size: 9px; color: #bbb; white-space: nowrap; }
.tray button { height: 18px; display: flex; align-items: center; gap: 3px; background: #404040; }
.tray svg { width: 13px; height: 13px; }

.work { flex: 1; min-height: 0; display: flex; }
.dock { width: 234px; flex: none; display: flex; flex-direction: column; }
.docktitle { display: flex; align-items: center; height: 17px; margin: 2px 4px 0 3px; background: #3a3a3a; color: #999; font-size: 8px; }
.docktitle h2 { flex: 1; text-align: center; }
.docktitle button { width: 15px; height: 16px; display: flex; align-items: center; justify-content: center; }
.docktitle svg { width: 8px; height: 8px; }
.tabs { display: flex; color: #777; flex: none; font-size: 9px; }
.toptabs { margin-top: 3px; padding-left: 8px; height: 21px; border-bottom: 1px solid #666; }
.toptabs button { width: 56px; }
.toptabs .active { width: 50px; margin-bottom: -1px; background: #444; border-top: 3px solid #4a7ddb; border-right: 1px solid #666; border-left: 1px solid #555; color: #ddd; }
.tree { flex: 151 1 0; min-height: 0; margin: 5px 6px 0; border-radius: 2px; background: #0f0f0f; overflow: hidden; }
.treehead { display: flex; height: 25px; line-height: 26px; background: #202020; font-size: 9px; }
.treehead span { background: #000; width: 98px; padding-left: 4px; border-right: 1px solid #202020; }
.treehead span + span { width: 80px; padding-left: 5px; }
.treebody { position: relative; }
.guides { position: absolute; left: 0; top: 0; width: 100px; height: 96px; }
.node { width: 178px; height: 16px; display: flex; align-items: center; gap: 5px; font-size: 9px; line-height: 16px; }
.node > svg { width: 12px; height: 12px; }
.root { padding-left: 2px; }
.l2 { padding-left: 16px; }
.l3 { padding-left: 32px; }
.node .tw { width: 10px; height: 10px; margin-left: 3px; color: #ccc; }
.shut { transform: rotate(-90deg); }
.flip { transform: rotate(180deg); }
.bodysel { position: relative; display: flex; align-items: center; gap: 5px; width: 66px; height: 15px; padding-left: 2px; margin-left: -2px; background: #e6e6ff; color: #fff; }
.bodysel svg { width: 12px; height: 12px; }
.selected { background: #1f52c0; }
.hsplit { flex: none; height: 2px; width: 30px; margin: 9px 0 9px 101px; background: repeating-linear-gradient(90deg, #222 0 4px, transparent 4px 7px); }

.props { flex: 157 1 0; min-height: 0; margin: 0 6px; display: flex; overflow: hidden; border-radius: 2px; background: #0f0f0f; position: relative; }
.proparea { flex: 1; min-width: 0; display: flex; flex-direction: column; }
.prophead { flex: none; height: 25px; line-height: 26px; display: flex; background: #000; font-size: 9px; }
.prophead span { width: 80px; padding-left: 5px; }
.clip { overflow: hidden; flex: 1; min-height: 0; }
table { width: 100%; margin-top: -9px; border-spacing: 0; table-layout: fixed; font-size: 9px; line-height: 15px; }
th, td { padding: 0 0 0 3px; height: 17px; text-align: left; font-weight: 400; white-space: nowrap; border-bottom: 1px solid #353535; }
th { width: 79px; padding-left: 18px; position: relative; border-right: 1px solid #333; }
.grp th { padding-left: 2px; background: #000; font-weight: 700; color: #ccc; }
.alt { background: #202020; }
.sel { background: #1f52c0; color: #fff; }
.sel td { padding: 0; }
th .tw { position: absolute; left: 2px; top: 3px; width: 10px; height: 10px; }
th.sub { padding-left: 34px; }
th.sub::before { content: ""; position: absolute; left: 24px; top: 0; width: 7px; height: 8px; border-left: 1px solid #666; border-bottom: 1px solid #666; }
.spin { display: flex; align-items: center; height: 16px; }
.spin input { flex: 1; min-width: 0; height: 16px; border: 0; padding: 0 0 0 7px; background: none; color: #fff; font: inherit; }
.spin .fx { width: 12px; height: 12px; margin-right: 18px; }
.steps { display: flex; flex-direction: column; width: 16px; height: 16px; background: #16378a; }
.steps button { height: 8px; display: flex; justify-content: center; align-items: center; }
.steps svg { width: 10px; height: 10px; }
.callout { position: absolute; left: 74px; right: 8px; top: 63px; height: 26px; border: 3px solid #f00000; pointer-events: none; }
.scroll { width: 13px; flex: none; display: flex; flex-direction: column; align-items: center; padding: 1px 0; }
.scroll svg { width: 9px; height: 9px; }
.scroll i { width: 5px; height: 21px; margin: auto 0 17px; border-radius: 2px; background: #555; }
.bottabs { margin: 5px 0 0; height: 21px; border-top: 1px solid #666; }
.bottabs button { width: 63px; padding-left: 4px; }
.bottabs .active { width: 51px; padding: 0; margin-top: -1px; color: #ddd; background: #444; border: solid #666; border-width: 0 1px; border-bottom: 3px solid #4a7ddb; }
.vsplit { width: 2px; height: 30px; margin: auto 3px auto 3px; background: repeating-linear-gradient(180deg, #222 0 4px, transparent 4px 7px); }

.mdi { flex: 1; min-width: 0; display: flex; flex-direction: column; }
.scene { flex: 1; min-height: 0; width: 100%; }
.mditabs { flex: none; height: 23px; border-top: 1px solid #666; }
.mditab { width: 102px; height: 23px; display: flex; align-items: center; gap: 8px; padding-left: 3px; border-bottom: 3px solid #4a7ddb; border-right: 1px solid #666; font-family: "Liberation Sans", sans-serif; font-size: 9px; white-space: nowrap; }
.mditab svg { width: 12px; height: 12px; }
.mditab span { flex: 1; }
.mditab button { width: 14px; height: 14px; display: flex; align-items: center; justify-content: center; margin-right: 3px; color: #222; }
.mditab button svg { width: 10px; height: 10px; }

.status { flex: none; height: 32px; display: flex; align-items: center; padding: 0 2px; color: #ccc; white-space: nowrap; font-family: "Liberation Sans", "Noto Sans CJK JP", sans-serif; font-size: 9px; }
.status p { flex: 1; font-size: 10px; }
.statool { display: flex; align-items: center; gap: 6px; height: 28px; padding: 0 7px 0 6px; border-left: 1px solid #777; }
.statool button { display: flex; align-items: center; justify-content: center; height: 14px; }
.statool svg { width: 13px; height: 13px; }
.statool .lockbtn { width: 27px; border: 1px solid #7590cc; border-radius: 2px; background: #1f52c0; }
.tri { width: 0; height: 0; border: 4px solid transparent; border-top-color: #ddd; border-bottom: 0; margin-left: 3px; }
.lockbtn .tri { margin-left: 1px; }
.ratio { display: flex; align-items: center; height: 20px; padding: 0 6px; border-left: 1px solid #777; }
.cadwrap { height: 28px; display: flex; align-items: center; padding: 0 4px 0 6px; border-left: 1px solid #777; border-right: 2px solid #777; }
.cad { width: 78px; height: 20px; display: flex; align-items: center; justify-content: center; gap: 3px; border: 1px solid #111; border-radius: 3px; background: linear-gradient(#1c1c1c, #050505); color: #999; }
.status output { padding-left: 3px; }
```
